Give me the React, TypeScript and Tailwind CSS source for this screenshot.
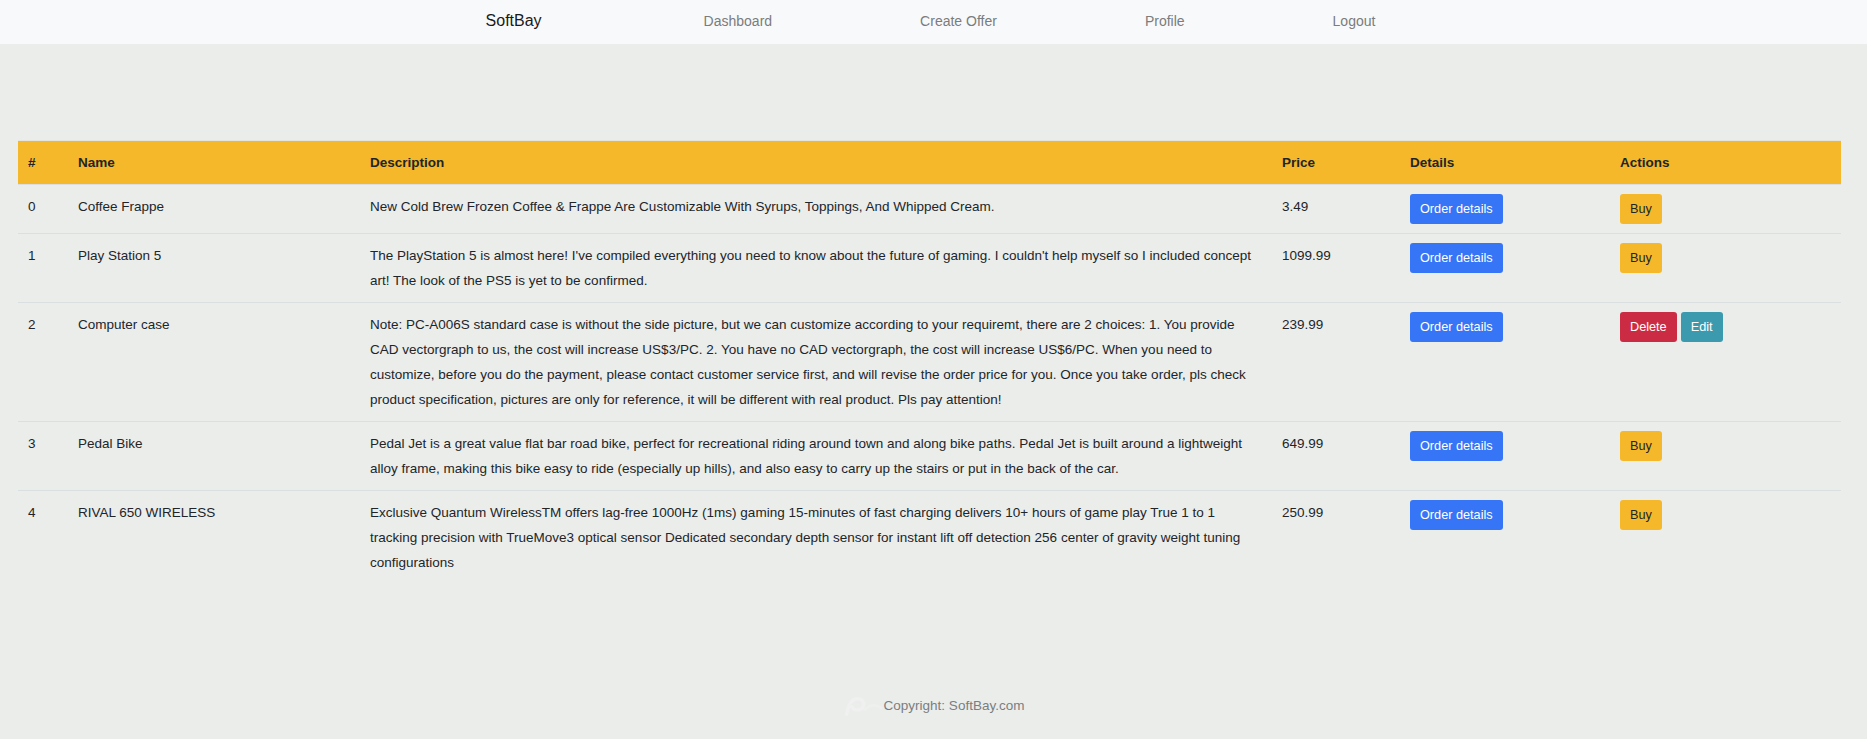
import React from 'react';

type Product = {
  id: number;
  name: string;
  description: string;
  price: string;
  owner: boolean; // owner sees delete/edit instead of buy
};

const products: Product[] = [
  {
    id: 0,
    name: 'Coffee Frappe',
    description:
      'New Cold Brew Frozen Coffee & Frappe Are Customizable With Syrups, Toppings, And Whipped Cream.',
    price: '3.49',
    owner: false,
  },
  {
    id: 1,
    name: 'Play Station 5',
    description:
      "The PlayStation 5 is almost here! I've compiled everything you need to know about the future of gaming. I couldn't help myself so I included concept art! The look of the PS5 is yet to be confirmed.",
    price: '1099.99',
    owner: false,
  },
  {
    id: 2,
    name: 'Computer case',
    description:
      'Note: PC-A006S standard case is without the side picture, but we can customize according to your requiremt, there are 2 choices: 1. You provide CAD vectorgraph to us, the cost will increase US$3/PC. 2. You have no CAD vectorgraph, the cost will increase US$6/PC. When you need to customize, before you do the payment, please contact customer service first, and will revise the order price for you. Once you take order, pls check product specification, pictures are only for reference, it will be different with real product. Pls pay attention!',
    price: '239.99',
    owner: true,
  },
  {
    id: 3,
    name: 'Pedal Bike',
    description:
      'Pedal Jet is a great value flat bar road bike, perfect for recreational riding around town and along bike paths. Pedal Jet is built around a lightweight alloy frame, making this bike easy to ride (especially up hills), and also easy to carry up the stairs or put in the back of the car.',
    price: '649.99',
    owner: false,
  },
  {
    id: 4,
    name: 'RIVAL 650 WIRELESS',
    description:
      'Exclusive Quantum WirelessTM offers lag-free 1000Hz (1ms) gaming 15-minutes of fast charging delivers 10+ hours of game play True 1 to 1 tracking precision with TrueMove3 optical sensor Dedicated secondary depth sensor for instant lift off detection 256 center of gravity weight tuning configurations',
    price: '250.99',
    owner: false,
  },
];

const cell = 'px-[10px] py-[9px] align-top text-left';
const btn = 'h-[30px] px-[10px] rounded-[3px] text-[12.7px] leading-none';

function Navbar() {
  return (
    <nav className="h-[44px] bg-[#f8f9fa] flex items-center justify-center pr-[6px] pb-[2px]">
      <span className="text-[16px] text-[#1a1a1a] mr-[162px]">SoftBay</span>
      <div className="flex gap-[148px] text-[14px] text-[#7b7c7d]">
        <a href="#">Dashboard</a>
        <a href="#">Create Offer</a>
        <a href="#">Profile</a>
        <a href="#">Logout</a>
      </div>
    </nav>
  );
}

function ProductRow({ product }: { product: Product }) {
  return (
    <tr className="border-t border-[#dcdfe2]">
      <td className={cell}>{product.id}</td>
      <td className={cell}>{product.name}</td>
      <td className={cell}>{product.description}</td>
      <td className={cell}>{product.price}</td>
      <td className={cell}>
        <button className={`${btn} bg-[#3575f6] text-white`}>Order details</button>
      </td>
      <td className={cell}>
        {product.owner ? (
          <div className="flex gap-[4px]">
            <button className={`${btn} bg-[#cb2c43] text-white`}>Delete</button>
            <button className={`${btn} bg-[#3b9aad] text-white`}>Edit</button>
          </div>
        ) : (
          <button className={`${btn} bg-[#f6b82b] text-[#212529]`}>Buy</button>
        )}
      </td>
    </tr>
  );
}

export default function App() {
  return (
    <div
      className="min-h-screen bg-[#ebedeb] flex flex-col text-[#212529]"
      style={{ fontFamily: '"Liberation Sans", Arial, sans-serif' }}
    >
      <Navbar />

      <main className="mt-[96px] px-[18px]">
        <table className="table-fixed border-collapse w-[1823px] text-[13.5px] leading-[25px]">
          <colgroup>
            <col className="w-[50px]" />
            <col className="w-[292px]" />
            <col className="w-[912px]" />
            <col className="w-[128px]" />
            <col className="w-[210px]" />
            <col className="w-[231px]" />
          </colgroup>
          <thead>
            <tr className="bg-[#f6b82b] border-t border-[#e4e4e0] font-bold">
              <th className={cell}>#</th>
              <th className={cell}>Name</th>
              <th className={cell}>Description</th>
              <th className={cell}>Price</th>
              <th className={cell}>Details</th>
              <th className={cell}>Actions</th>
            </tr>
          </thead>
          <tbody>
            {products.map((p) => (
              <ProductRow key={p.id} product={p} />
            ))}
          </tbody>
        </table>
      </main>

      <footer className="mt-auto pt-[26px] pb-[22px] flex items-center justify-center">
        {/* faded logo behind the copyright line */}
        <svg width="40" height="22" viewBox="0 0 44 22" className="mr-[1px] opacity-40">
          <path
            d="M4 20 C 6 9, 10 3, 16 3 C 22 3, 24 8, 22 12 C 20 16, 12 17, 10 12"
            fill="none"
            stroke="#f5f6f5"
            strokeWidth="4"
            strokeLinecap="round"
          />
          <path d="M24 15 C 30 9, 36 9, 42 13" fill="none" stroke="#f3f4f3" strokeWidth="3" strokeLinecap="round" />
        </svg>
        <span className="text-[13.5px] leading-[20px] text-[#7a7e82]">Copyright: SoftBay.com</span>
      </footer>
    </div>
  );
}
